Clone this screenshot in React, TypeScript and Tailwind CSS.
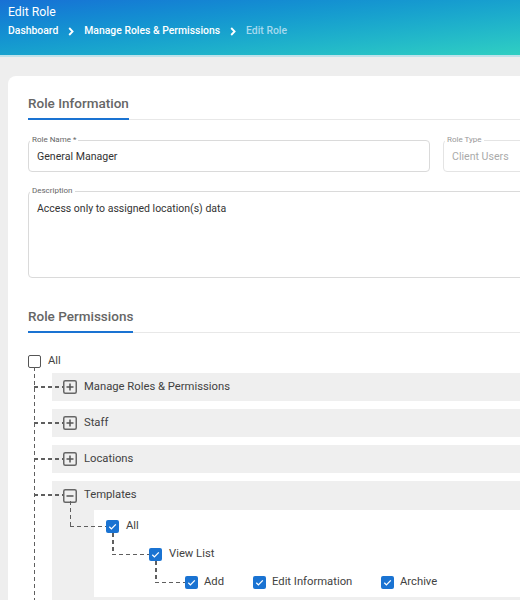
import type { ReactNode } from 'react'

const vDash = 'bg-[repeating-linear-gradient(to_bottom,#5f5f5f_0_4px,transparent_4px_7px)]'
const hDash = 'bg-[repeating-linear-gradient(to_right,#5f5f5f_0_4px,transparent_4px_7px)]'

function Chevron() {
  return (
    <svg width="6" height="9" viewBox="0 0 6 9" className="shrink-0">
      <path d="M1.2 1 L4.6 4.5 L1.2 8" fill="none" stroke="white" strokeWidth="1.8" />
    </svg>
  )
}

function ExpandIcon({ open }: { open?: boolean }) {
  return (
    <svg width="14" height="14" viewBox="0 0 14 14" className="shrink-0">
      <rect x="0.75" y="0.75" width="12.5" height="12.5" rx="1.5" fill="none" stroke="#666" strokeWidth="1.5" />
      <path d="M3.5 7 H10.5" stroke="#555" strokeWidth="1.5" />
      {!open && <path d="M7 3.5 V10.5" stroke="#555" strokeWidth="1.5" />}
    </svg>
  )
}

function Checked() {
  return (
    <span className="flex h-[13px] w-[13px] shrink-0 items-center justify-center rounded-[2px] bg-[#1a73d2]">
      <svg width="11" height="11" viewBox="0 0 11 11">
        <path d="M2.3 5.8 L4.4 7.9 L8.8 3.4" fill="none" stroke="white" strokeWidth="1.3" />
      </svg>
    </span>
  )
}

function SectionTitle({ children }: { children: ReactNode }) {
  return (
    <div className="flex border-b border-[#e8e8e8]">
      <span className="-mb-px border-b-2 border-[#1a73d2] pb-[5px] text-[13.5px] leading-[20px] font-medium text-[#666]">
        {children}
      </span>
    </div>
  )
}

function TreeRow({ label }: { label: string }) {
  return (
    <div className="relative flex h-[28px] items-center gap-[7px] bg-[#efefef] pl-[11px]">
      <div className={`absolute top-[13px] left-[-18px] h-[1.5px] w-[29px] ${hDash}`} />
      <ExpandIcon />
      <span className="text-[11.25px] text-[#424242]">{label}</span>
    </div>
  )
}

export default function App() {
  return (
    <div className="h-[600px] w-[520px] overflow-hidden bg-[#eeeeee] font-['Roboto',sans-serif]">
      {/* Header */}
      <div className="h-[57px] border-b-2 border-[#bfe2ea] bg-linear-to-br from-[#1870d5] to-[#30cfc2] px-[8px] pt-[3px]">
        <h1 className="text-[12.25px] leading-[18px] text-white">Edit Role</h1>
        <div className="mt-[1px] flex items-center gap-[10px] text-[10.4px] leading-[18px] font-medium">
          <span className="text-white">Dashboard</span>
          <Chevron />
          <span className="text-white">Manage Roles &amp; Permissions</span>
          <Chevron />
          <span className="text-[#a6d9ee]">Edit Role</span>
        </div>
      </div>

      {/* Card */}
      <div className="mt-[19px] ml-[8px] w-[600px] rounded-tl-[8px] bg-white pt-[17px] pl-[20px]">
        <SectionTitle>Role Information</SectionTitle>

        <div className="mt-[20px] flex gap-[13px]">
          <div className="relative flex h-[32px] w-[402px] items-center rounded-[4px] border border-[#dadada] px-[8px] pt-[2px]">
            <span className="absolute top-[-6px] left-[1px] bg-white px-[2px] text-[8px] leading-[10px] text-[#666]">
              Role Name *
            </span>
            <span className="text-[10.6px] text-[#333]">General Manager</span>
          </div>
          <div className="relative flex h-[32px] flex-1 items-center rounded-[4px] border border-[#e4e4e4] px-[8px] pt-[2px]">
            <span className="absolute top-[-6px] left-[1px] bg-white px-[2px] text-[8px] leading-[10px] text-[#999]">
              Role Type
            </span>
            <span className="text-[10.6px] text-[#aaa]">Client Users</span>
          </div>
        </div>

        <div className="relative mt-[19px] h-[87px] rounded-[4px] border border-[#dadada] px-[8px] pt-[9px]">
          <span className="absolute top-[-6px] left-[1px] bg-white px-[2px] text-[8px] leading-[10px] text-[#666]">
            Description
          </span>
          <p className="text-[10.5px] leading-[16px] text-[#333]">Access only to assigned location(s) data</p>
        </div>

        <div className="mt-[28px]">
          <SectionTitle>Role Permissions</SectionTitle>
        </div>

        {/* Permission tree */}
        <div className="mt-[18px] flex h-[20px] items-center gap-[7px]">
          <span className="h-[13px] w-[13px] rounded-[2px] border-[1.5px] border-[#555] bg-white" />
          <span className="text-[11.25px] text-[#444]">All</span>
        </div>

        <div className="relative mt-[2px] flex flex-col gap-[8px] pl-[24px]">
          <div className={`absolute top-[-6px] bottom-0 left-[5.5px] w-[1.5px] ${vDash}`} />
          <TreeRow label="Manage Roles & Permissions" />
          <TreeRow label="Staff" />
          <TreeRow label="Locations" />

          <div className="bg-[#efefef] pb-[6px]">
            <div className="relative flex h-[29px] items-center gap-[7px] pl-[11px]">
              <div className={`absolute top-[13px] left-[-18px] h-[1.5px] w-[29px] ${hDash}`} />
              <ExpandIcon open />
              <span className="text-[11.25px] text-[#424242]">Templates</span>
            </div>

            <div className="ml-[42px] bg-white pt-[2px] pb-[1px]">
              <div className="relative flex h-[28px] items-center gap-[7px] pl-[12px]">
                <div className={`absolute top-[-11px] left-[-24.5px] h-[25px] w-[1.5px] ${vDash}`} />
                <div className={`absolute top-[13.5px] left-[-24.5px] h-[1.5px] w-[36px] ${hDash}`} />
                <Checked />
                <span className="text-[11.25px] text-[#424242]">All</span>
              </div>

              <div className="relative flex h-[28px] items-center gap-[7px] pl-[55px]">
                <div className={`absolute top-[-7px] left-[18px] h-[21px] w-[1.5px] ${vDash}`} />
                <div className={`absolute top-[13.5px] left-[18px] h-[1.5px] w-[37px] ${hDash}`} />
                <Checked />
                <span className="text-[11.25px] text-[#424242]">View List</span>
              </div>

              <div className="relative flex h-[28px] items-center pl-[91px]">
                <div className={`absolute top-[-7px] left-[61px] h-[21px] w-[1.5px] ${vDash}`} />
                <div className={`absolute top-[13.5px] left-[61px] h-[1.5px] w-[30px] ${hDash}`} />
                <div className="flex w-[68px] items-center gap-[6px]">
                  <Checked />
                  <span className="text-[11.25px] text-[#424242]">Add</span>
                </div>
                <div className="flex w-[128px] items-center gap-[6px]">
                  <Checked />
                  <span className="text-[11.25px] text-[#424242]">Edit Information</span>
                </div>
                <div className="flex items-center gap-[6px]">
                  <Checked />
                  <span className="text-[11.25px] text-[#424242]">Archive</span>
                </div>
              </div>
            </div>
          </div>
        </div>
      </div>
    </div>
  )
}
